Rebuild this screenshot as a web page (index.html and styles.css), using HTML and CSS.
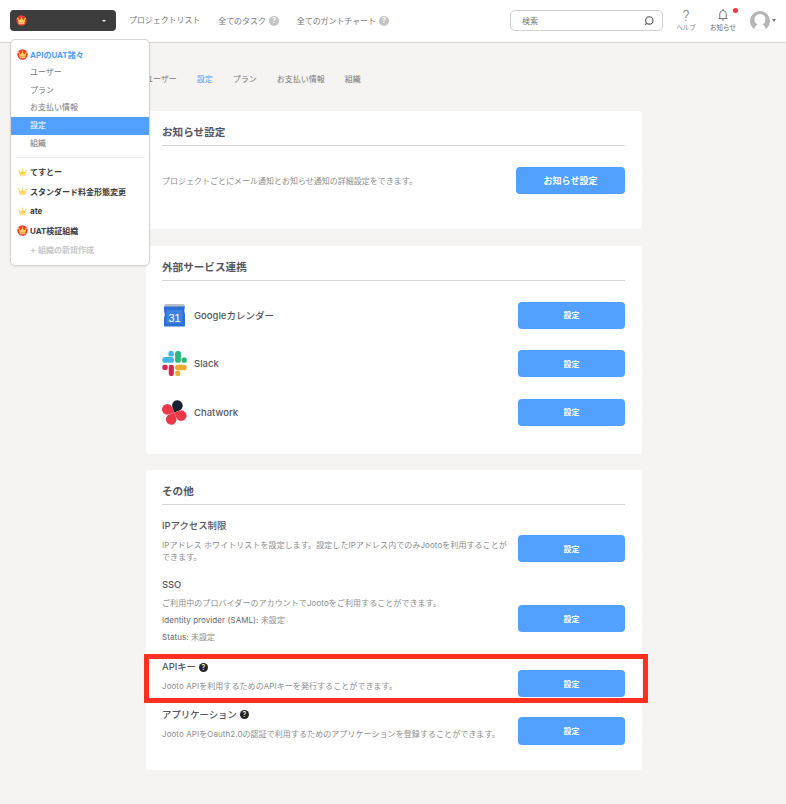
FILE: index.html
```html
<!DOCTYPE html>
<html lang="ja">
<head>
<meta charset="utf-8">
<title>設定</title>
<link rel="stylesheet" href="styles.css">
</head>
<body>
<svg class="defs" width="0" height="0" aria-hidden="true">
  <symbol id="crown-path" viewBox="0 0 12 12">
    <path d="M2 4.200 4.300 5.800 6 3 7.700 5.800 10 4.200 9.200 8.500H2.800Z" fill="#ffd35a"/>
    <circle cx="2" cy="3.700" r=".8" fill="#ffd35a"/><circle cx="6" cy="2.500" r=".8" fill="#ffd35a"/><circle cx="10" cy="3.700" r=".8" fill="#ffd35a"/>
    <rect x="2.800" y="8.900" width="6.400" height="1.100" fill="#ffe08a"/>
  </symbol>
</svg>

<header class="topbar">
  <button class="org-switch">
    <svg class="org-icon" viewBox="0 0 12 12"><circle cx="6" cy="6" r="5.600" fill="#f0392b"/><use href="#crown-path"/></svg>
    <span class="caret-white"></span>
  </button>
  <nav class="topnav">
    <a class="topnav-item raised">プロジェクトリスト</a>
    <a class="topnav-item">全てのタスク <span class="hint">?</span></a>
    <a class="topnav-item">全てのガントチャート <span class="hint">?</span></a>
  </nav>
  <div class="top-right">
    <div class="search">
      <span>検索</span>
      <svg class="search-icon" viewBox="0 0 12 12"><circle cx="6.300" cy="5.400" r="3.700" fill="none" stroke="#555" stroke-width="1.100"/><path d="M3.600 8 2.200 10" stroke="#555" stroke-width="1.100" fill="none"/></svg>
    </div>
    <div class="tool tool-help"><span class="q">?</span><span class="tool-label">ヘルプ</span></div>
    <div class="tool tool-bell">
      <svg class="bell" viewBox="0 0 12 14"><path d="M1.500 10.500h9M2.800 10.500V5.800a3.200 3.200 0 0 1 6.400 0v4.700M6 1v1.500M4.800 12h2.400" fill="none" stroke="#666" stroke-width=".9"/></svg>
      <span class="dot"></span>
      <span class="tool-label dark">お知らせ</span>
    </div>
    <svg class="avatar" viewBox="0 0 20 20"><defs><clipPath id="av"><circle cx="10" cy="10" r="10"/></clipPath></defs><circle cx="10" cy="10" r="10" fill="#b5b5b5"/><g clip-path="url(#av)"><circle cx="10" cy="8.500" r="5.500" fill="#fff"/><path d="M4 21c0-6 3-8 6-8s6 2 6 8Z" fill="#fff"/></g></svg>
    <span class="caret-gray"></span>
  </div>
</header>

<aside class="org-menu">
  <div class="org-row current"><svg class="org-icon" viewBox="0 0 12 12"><circle cx="6" cy="6" r="5.600" fill="#f0392b"/><use href="#crown-path"/></svg>APIのUAT諸々</div>
  <div class="menu-item">ユーザー</div>
  <div class="menu-item">プラン</div>
  <div class="menu-item">お支払い情報</div>
  <div class="menu-item active">設定</div>
  <div class="menu-item">組織</div>
  <div class="menu-sep"></div>
  <div class="org-row"><svg class="org-icon" viewBox="0 0 12 12"><use href="#crown-path"/></svg>てすとー</div>
  <div class="org-row"><svg class="org-icon" viewBox="0 0 12 12"><use href="#crown-path"/></svg>スタンダード料金形態変更</div>
  <div class="org-row"><svg class="org-icon" viewBox="0 0 12 12"><use href="#crown-path"/></svg>ate</div>
  <div class="org-row"><svg class="org-icon" viewBox="0 0 12 12"><circle cx="6" cy="6" r="5.600" fill="#f0392b"/><use href="#crown-path"/></svg>UAT検証組織</div>
  <div class="org-row create"><span class="plus">+</span>組織の新規作成</div>
</aside>

<main class="content">
  <nav class="tabs">
    <a class="tab">ユーザー</a>
    <a class="tab on">設定</a>
    <a class="tab">プラン</a>
    <a class="tab">お支払い情報</a>
    <a class="tab">組織</a>
  </nav>

  <section class="card card-notice">
    <h2 class="card-title">お知らせ設定</h2>
    <div class="row">
      <p class="desc grow">プロジェクトごとにメール通知とお知らせ通知の詳細設定をできます。</p>
      <button class="btn btn-wide">お知らせ設定</button>
    </div>
  </section>

  <section class="card card-services">
    <h2 class="card-title">外部サービス連携</h2>
    <div class="service-list">
      <div class="row">
        <div class="service grow">
          <svg class="service-icon" viewBox="0 0 25 25">
            <rect x="2.500" y="1" width="20" height="3" rx="1" fill="#b9bec4"/>
            <path d="M2 3.500h21l-.8 4 .8 4v11.500l-.5.500H2.500l-.5-.5V15l.8-3.500L2 7.500Z" fill="#2b6fd4"/>
            <rect x="4.500" y="7" width="16" height="13.500" fill="#3f82e0"/>
            <text x="12.500" y="18.500" class="cal-num">31</text>
          </svg>
          <span class="service-name">Googleカレンダー</span>
        </div>
        <button class="btn">設定</button>
      </div>
      <div class="row">
        <div class="service grow">
          <svg class="service-icon" viewBox="48 303 76 78">
            <rect x="48" y="322" width="36" height="18" rx="8" fill="#3fb8e8"/>
            <rect x="67" y="303" width="17" height="17" rx="6" fill="#3fb8e8"/>
            <rect x="88" y="303" width="18" height="37" rx="8" fill="#2eb67d"/>
            <rect x="108" y="323" width="16" height="17" rx="6" fill="#2eb67d"/>
            <rect x="48" y="346" width="17" height="16" rx="6" fill="#d9244f"/>
            <rect x="68" y="346" width="16" height="35" rx="7" fill="#d9244f"/>
            <rect x="88" y="346" width="36" height="17" rx="8" fill="#e9ac33"/>
            <rect x="88" y="365" width="16" height="16" rx="6" fill="#e9ac33"/>
          </svg>
          <span class="service-name">Slack</span>
        </div>
        <button class="btn">設定</button>
      </div>
      <div class="row">
        <div class="service grow">
          <svg class="service-icon" viewBox="0 0 25 25">
            <g transform="translate(12.300 12.500)">
              <path transform="rotate(24)" d="M0 0-3.750-3.850A5.300 5.300 0 1 1 3.750-3.850Z" fill="#16202e"/>
              <path transform="rotate(114)" d="M0 0-3.750-3.850A5.300 5.300 0 1 1 3.750-3.850Z" fill="#e8384a"/>
              <path transform="rotate(204)" d="M0 0-3.750-3.850A5.300 5.300 0 1 1 3.750-3.850Z" fill="#e8384a"/>
              <path transform="rotate(294)" d="M0 0-3.750-3.850A5.300 5.300 0 1 1 3.750-3.850Z" fill="#e8384a"/>
            </g>
          </svg>
          <span class="service-name">Chatwork</span>
        </div>
        <button class="btn">設定</button>
      </div>
    </div>
  </section>

  <section class="card card-other">
    <h2 class="card-title">その他</h2>
    <div class="row setting setting-ip">
      <div class="grow">
        <h3 class="setting-title">IPアクセス制限</h3>
        <p class="desc desc-ip">IPアドレス ホワイトリストを設定します。設定したIPアドレス内でのみJootoを利用することが<br>できます。</p>
      </div>
      <button class="btn btn-low">設定</button>
    </div>
    <div class="row setting setting-sso">
      <div class="grow">
        <h3 class="setting-title">SSO</h3>
        <p class="desc">ご利用中のプロバイダーのアカウントでJootoをご利用することができます。</p>
        <p class="desc meta"><span class="meta-key">Identity provider (SAML):</span> 未設定</p>
        <p class="desc meta"><span class="meta-key">Status:</span> 未設定</p>
      </div>
      <button class="btn btn-low">設定</button>
    </div>
    <div class="row setting setting-api">
      <div class="grow">
        <h3 class="setting-title">APIキー <span class="info">?</span></h3>
        <p class="desc">Jooto APIを利用するためのAPIキーを発行することができます。</p>
      </div>
      <button class="btn btn-low">設定</button>
    </div>
    <div class="row setting setting-app">
      <div class="grow">
        <h3 class="setting-title">アプリケーション <span class="info">?</span></h3>
        <p class="desc">Jooto APIをOauth2.0の認証で利用するためのアプリケーションを登録することができます。</p>
      </div>
      <button class="btn btn-low btn-tall">設定</button>
    </div>
  </section>
</main>

<div class="callout"></div>
</body>
</html>
```

FILE: styles.css
```css
* { box-sizing: border-box; }
html, body { margin: 0; padding: 0; }
body {
  background: #f5f4f2;
  color: #55555f;
  font-family: Inter, "Noto Sans CJK JP", sans-serif;
  font-size: 8px;
  line-height: 12px;
  overflow: hidden;
  height: 804px;
  position: relative;
}
.defs { position: absolute; }
h2, h3, p { margin: 0; }

/* top bar */
.topbar {
  height: 43px;
  background: #fff;
  border-bottom: 1px solid #d6d6d6;
  display: flex;
  align-items: flex-start;
  padding: 10px 10px 0 10px;
}
.org-switch {
  width: 106px;
  height: 21px;
  border: 0;
  border-radius: 4px;
  background: #3d3d3d;
  display: flex;
  align-items: center;
  justify-content: space-between;
  padding: 0 10px 0 6px;
}
.org-icon { width: 11px; height: 11px; flex: none; }
.caret-white {
  width: 0; height: 0;
  border: 2.500px solid transparent;
  border-top: 2.500px solid #fff;
  border-bottom: 0;
}
.topnav { display: flex; margin-left: 13px; gap: 18px; color: #777; padding-top: 5px; }
.topnav-item { display: flex; gap: 3px; align-items: center; height: 12px; letter-spacing: -.08px; }
.topnav-item.raised { margin-top: -1px; }
.hint {
  width: 10px; height: 10px; border-radius: 50%;
  background: #c4c4c4; color: #fff;
  font-size: 7px; line-height: 10px; text-align: center; font-weight: 700;
}
.top-right { margin-left: auto; display: flex; align-items: flex-start; }
.search {
  width: 153px; height: 21px;
  border: 1px solid #cfcfcf; border-radius: 5px;
  display: flex; align-items: center; justify-content: space-between;
  padding: 0 7px 0 11px; color: #777;
}
.search-icon { width: 12px; height: 12px; }
.tool { display: flex; flex-direction: column; align-items: center; position: relative; }
.tool-help { width: 26px; margin-left: 10px; margin-top: -1px; }
.q { font-family: Roboto, sans-serif; font-weight: 300; font-size: 15px; line-height: 15px; color: #777; height: 14px; }
.tool-label { font-size: 6.500px; line-height: 9px; color: #888; margin-top: 1px; white-space: nowrap; }
.tool-label.dark { color: #666; }
.tool-bell { width: 26px; margin-left: 11px; margin-top: -2px; }
.bell { width: 12px; height: 14px; margin-bottom: 1px; }
.dot { position: absolute; left: 23px; top: 0; width: 5px; height: 5px; border-radius: 50%; background: #f5333f; }
.avatar { width: 20px; height: 20px; margin-left: 14px; margin-top: 1px; }
.caret-gray {
  width: 0; height: 0; margin: 9px 0 0 2px;
  border: 2px solid transparent; border-top: 3px solid #777; border-bottom: 0;
}

/* organisation menu */
.org-menu {
  position: absolute;
  left: 10px; top: 39px;
  width: 140px; height: 227px;
  background: #fff;
  border: 1px solid #d4d4d4;
  border-radius: 5px;
  box-shadow: 0 1px 2px rgba(0,0,0,.08);
  padding-top: 5px;
  color: #777;
}
.org-row {
  height: 19.500px;
  display: flex; align-items: center; gap: 2px;
  padding-left: 6px;
  font-weight: 700;
  color: #3c3c44;
}
.org-row.current { color: #4f9fff; height: 19px; }
.org-row.create { color: #c8c8c8; padding-left: 19px; gap: 2px; }
.plus { font-size: 9px; }
.menu-item { height: 17.700px; line-height: 17.700px; padding-left: 19px; }
.menu-item.active { background: #52a0ff; color: #fff; }
.menu-sep { height: 1px; background: #eee; margin: 5px 4px 4px 5px; }

/* main */
.content { margin-left: 146px; width: 496px; padding-top: 30px; }
.tabs { display: flex; gap: 20px; margin: 0 0 26px -1px; color: #777; }
.tab.on { color: #4f9fff; }
.card {
  background: #fff;
  border-radius: 4px;
  padding: 12px 17px 0 16px;
}
.card-notice { height: 118px; margin-bottom: 17px; }
.card-services { height: 208px; margin-bottom: 16px; }
.card-other { height: 300px; }
.card-title {
  font-size: 10.600px; line-height: 20px; font-weight: 700;
  color: #55555f;
  padding-bottom: 2px;
  border-bottom: 1px solid #d4d4d4;
}
.row { display: flex; align-items: center; }
.grow { flex: 1; min-width: 0; }
.card-notice .row { margin-top: 21px; }
.desc { color: #8c8c8c; letter-spacing: .07px; }
.card-notice .desc { letter-spacing: 0; }
.btn {
  flex: none;
  width: 107px; height: 27px;
  border: 0; border-radius: 4px;
  background: #52a0ff; color: #fff;
  font: 700 8px/12px Inter, "Noto Sans CJK JP", sans-serif;
}
.btn-wide { width: 109px; font-size: 9px; }
.service-list { margin-top: 20.900px; display: flex; flex-direction: column; gap: 21.500px; }
.service {
  display: flex; align-items: center; gap: 7px;
  font-size: 9.500px; font-weight: 500; color: #55555f;
}
.service-name { padding-top: 1px; }
.service-icon { width: 25px; height: 25px; flex: none; }
.cal-num { font-size: 11px; fill: #fff; text-anchor: middle; font-family: "Liberation Sans", sans-serif; }

.setting .grow { padding: 1px 5px 0 0; margin-bottom: -2px; }
.setting-ip { margin-top: 12px; }
.setting-sso { margin-top: 15px; }
.setting-api { margin-top: 10px; }
.setting-app { margin-top: 2px; }
.setting-title {
  font-size: 9.400px; line-height: 14px; font-weight: 500; color: #55555f;
  margin-bottom: 6px;
  display: flex; align-items: center; gap: 3px;
}
.setting-sso .setting-title { margin-bottom: 5px; }
.meta { margin-top: 5px; }
.setting-sso .meta:last-child { padding-bottom: 1px; }
.meta-key { color: #66666e; }
.info {
  width: 9px; height: 9px; border-radius: 50%;
  background: #222; color: #fff;
  font-size: 7px; line-height: 9px; text-align: center;
}
.btn-low { margin-top: 18px; }
.btn-tall { height: 28px; }

/* annotation */
.callout {
  position: absolute;
  left: 144px; top: 654px;
  width: 504px; height: 49px;
  border: 5px solid #ff3020;
}
```
